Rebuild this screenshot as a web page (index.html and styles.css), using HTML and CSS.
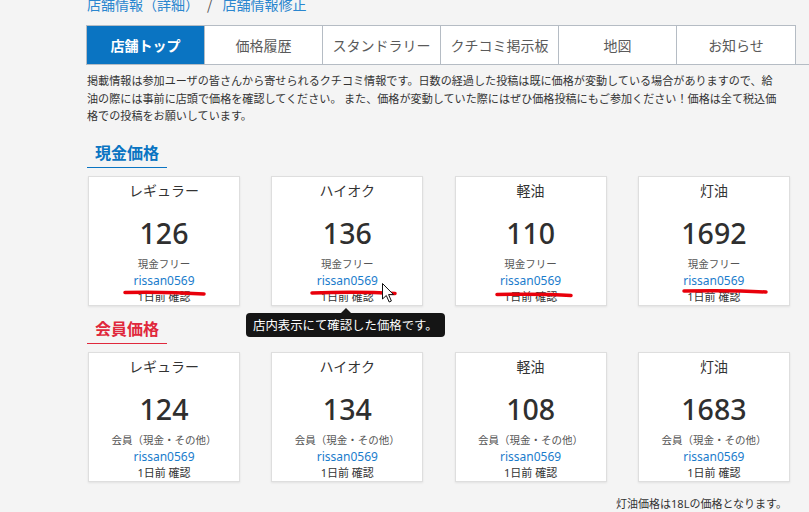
FILE: index.html
```html
<!DOCTYPE html>
<html lang="ja">
<head>
<meta charset="utf-8">
<link rel="stylesheet" href="styles.css">
</head>
<body>
<div class="page">
  <div class="crumb"><a>店舗情報（詳細）</a><span class="sep">/</span><a>店舗情報修正</a></div>
  <ul class="tabs">
    <li class="tab active">店舗トップ</li>
    <li class="tab">価格履歴</li>
    <li class="tab">スタンドラリー</li>
    <li class="tab">クチコミ掲示板</li>
    <li class="tab">地図</li>
    <li class="tab last">お知らせ</li>
  </ul>
  <p class="desc">掲載情報は参加ユーザの皆さんから寄せられるクチコミ情報です。日数の経過した投稿は既に価格が変動している場合がありますので、給<br>油の際には事前に店頭で価格を確認してください。 また、価格が変動していた際にはぜひ価格投稿にもご参加ください！価格は全て税込価<br>格での投稿をお願いしています。</p>

  <h2 class="sec cash">現金価格</h2>
  <div class="grid">
    <div class="card"><div class="name">レギュラー</div><div class="price">126</div><div class="label">現金フリー</div><div class="user">rissan0569</div><div class="date">1日前 確認</div></div>
    <div class="card"><div class="name">ハイオク</div><div class="price">136</div><div class="label">現金フリー</div><div class="user">rissan0569</div><div class="date">1日前 確認</div></div>
    <div class="card"><div class="name">軽油</div><div class="price">110</div><div class="label">現金フリー</div><div class="user">rissan0569</div><div class="date">1日前 確認</div></div>
    <div class="card"><div class="name">灯油</div><div class="price">1692</div><div class="label">現金フリー</div><div class="user">rissan0569</div><div class="date">1日前 確認</div></div>
  </div>

  <h2 class="sec member">会員価格</h2>
  <div class="grid">
    <div class="card"><div class="name">レギュラー</div><div class="price">124</div><div class="label">会員（現金・その他）</div><div class="user">rissan0569</div><div class="date">1日前 確認</div></div>
    <div class="card"><div class="name">ハイオク</div><div class="price">134</div><div class="label">会員（現金・その他）</div><div class="user">rissan0569</div><div class="date">1日前 確認</div></div>
    <div class="card"><div class="name">軽油</div><div class="price">108</div><div class="label">会員（現金・その他）</div><div class="user">rissan0569</div><div class="date">1日前 確認</div></div>
    <div class="card"><div class="name">灯油</div><div class="price">1683</div><div class="label">会員（現金・その他）</div><div class="user">rissan0569</div><div class="date">1日前 確認</div></div>
  </div>
  <p class="note">灯油価格は18Lの価格となります。</p>
</div>

<div class="tooltip">店内表示にて確認した価格です。</div>

<svg class="overlay" width="809" height="512" viewBox="0 0 809 512" xmlns="http://www.w3.org/2000/svg">
  <g fill="none" stroke="#e8000b" stroke-width="3.5" stroke-linecap="round">
    <path d="M125 292.5 C150 292, 180 292.5, 204 294"/>
    <path d="M312 293 C340 292, 370 292, 395 293.5"/>
    <path d="M497 294.5 C520 294, 550 294, 571 295.5"/>
    <path d="M684 291 C710 290.5, 740 290.5, 766 292"/>
  </g>
  <path d="M382.5 283.5 L382.5 299 L386.3 295.5 L389.2 302 L391.4 301 L388.6 294.6 L393.5 294.6 Z" fill="#fff" stroke="#111" stroke-width="1" stroke-linejoin="round"/>
</svg>
</body>
</html>
```
FILE: styles.css
```css
html, body {
  margin: 0;
  padding: 0;
  background: #f4f4f4;
  overflow: hidden;
}
body {
  width: 809px;
  height: 512px;
  font-family: "Noto Sans", "Noto Sans CJK JP", sans-serif;
  color: #333;
  position: relative;
}
.page {
  padding-left: 86px;
}
.crumb {
  margin-top: -3px;
  height: 14px;
  line-height: 14px;
  font-size: 14px;
  color: #2a86cf;
  padding-left: 1px;
  font-family: "Noto Sans CJK JP", sans-serif;
}
.crumb .sep {
  margin: 0 10px 0 8px;
  color: #555;
}
.tabs {
  list-style: none;
  margin: 14px 0 0 0;
  padding: 0;
  display: flex;
  border-bottom: 1px solid #b5bcc4;
  font-family: "Noto Sans CJK JP", sans-serif;
}
.tab {
  width: 117px;
  height: 38px;
  line-height: 38px;
  text-align: center;
  font-size: 14px;
  color: #5a5a5a;
  background: #fff;
  border-top: 1px solid #b5bcc4;
  border-left: 1px solid #b5bcc4;
}
.tab.last {
  width: 118px;
  border-right: 1px solid #b5bcc4;
}
.tab.active {
  background: #0a74c2;
  color: #fff;
  font-weight: bold;
}
.desc {
  margin: 7px 0 0 1px;
  font-size: 11.1px;
  line-height: 17.6px;
  color: #333;
  white-space: nowrap;
  font-family: "Noto Sans CJK JP", sans-serif;
}
.sec {
  display: block;
  width: 72px;
  margin: 16px 0 0 1px;
  padding: 0 0 4px 8px;
  font-size: 16px;
  line-height: 22px;
  font-weight: bold;
  font-family: "Noto Sans CJK JP", sans-serif;
}
.sec.cash {
  color: #0a74c2;
  border-bottom: 1px solid #0a74c2;
}
.sec.member {
  color: #e0283c;
  border-bottom: 1px solid #e0283c;
  margin-top: 11px;
}
.grid {
  display: grid;
  grid-template-columns: repeat(4, 152px);
  column-gap: 31.3px;
  margin: 8px 0 0 2px;
}
.card {
  box-sizing: border-box;
  height: 130px;
  background: #fff;
  border: 1px solid #dedede;
  box-shadow: 0 1px 2px rgba(0,0,0,0.08);
  text-align: center;
  padding-top: 4px;
}
.name {
  font-size: 14px;
  line-height: 18px;
  color: #333;
  font-family: "Noto Sans CJK JP", sans-serif;
}
.price {
  margin-top: 16px;
  font-size: 28.5px;
  line-height: 36px;
  color: #2f2f2f;
  font-weight: 500;
}
.label {
  margin-top: 5px;
  font-size: 10.5px;
  line-height: 16px;
  color: #555;
  font-family: "Noto Sans CJK JP", sans-serif;
}
.user {
  font-size: 12px;
  line-height: 17px;
  color: #1a7ccc;
}
.date {
  font-size: 11px;
  line-height: 16px;
  color: #333;
}
.note {
  margin: 14px 0 0 0;
  width: 701px;
  text-align: right;
  font-size: 11px;
  line-height: 16px;
  color: #333;
  font-family: "Noto Sans", "Noto Sans CJK JP", sans-serif;
}
.tooltip {
  position: absolute;
  left: 246px;
  top: 313px;
  width: 199px;
  height: 24px;
  box-sizing: border-box;
  padding-left: 7px;
  background: #151515;
  border-radius: 4px;
  color: #fff;
  font-size: 12.4px;
  line-height: 24px;
  white-space: nowrap;
  font-family: "Noto Sans CJK JP", sans-serif;
}
.tooltip::before {
  content: "";
  position: absolute;
  left: 95px;
  top: -5px;
  border-left: 5px solid transparent;
  border-right: 5px solid transparent;
  border-bottom: 5px solid #151515;
}
.overlay {
  position: absolute;
  left: 0;
  top: 0;
  pointer-events: none;
}
```
